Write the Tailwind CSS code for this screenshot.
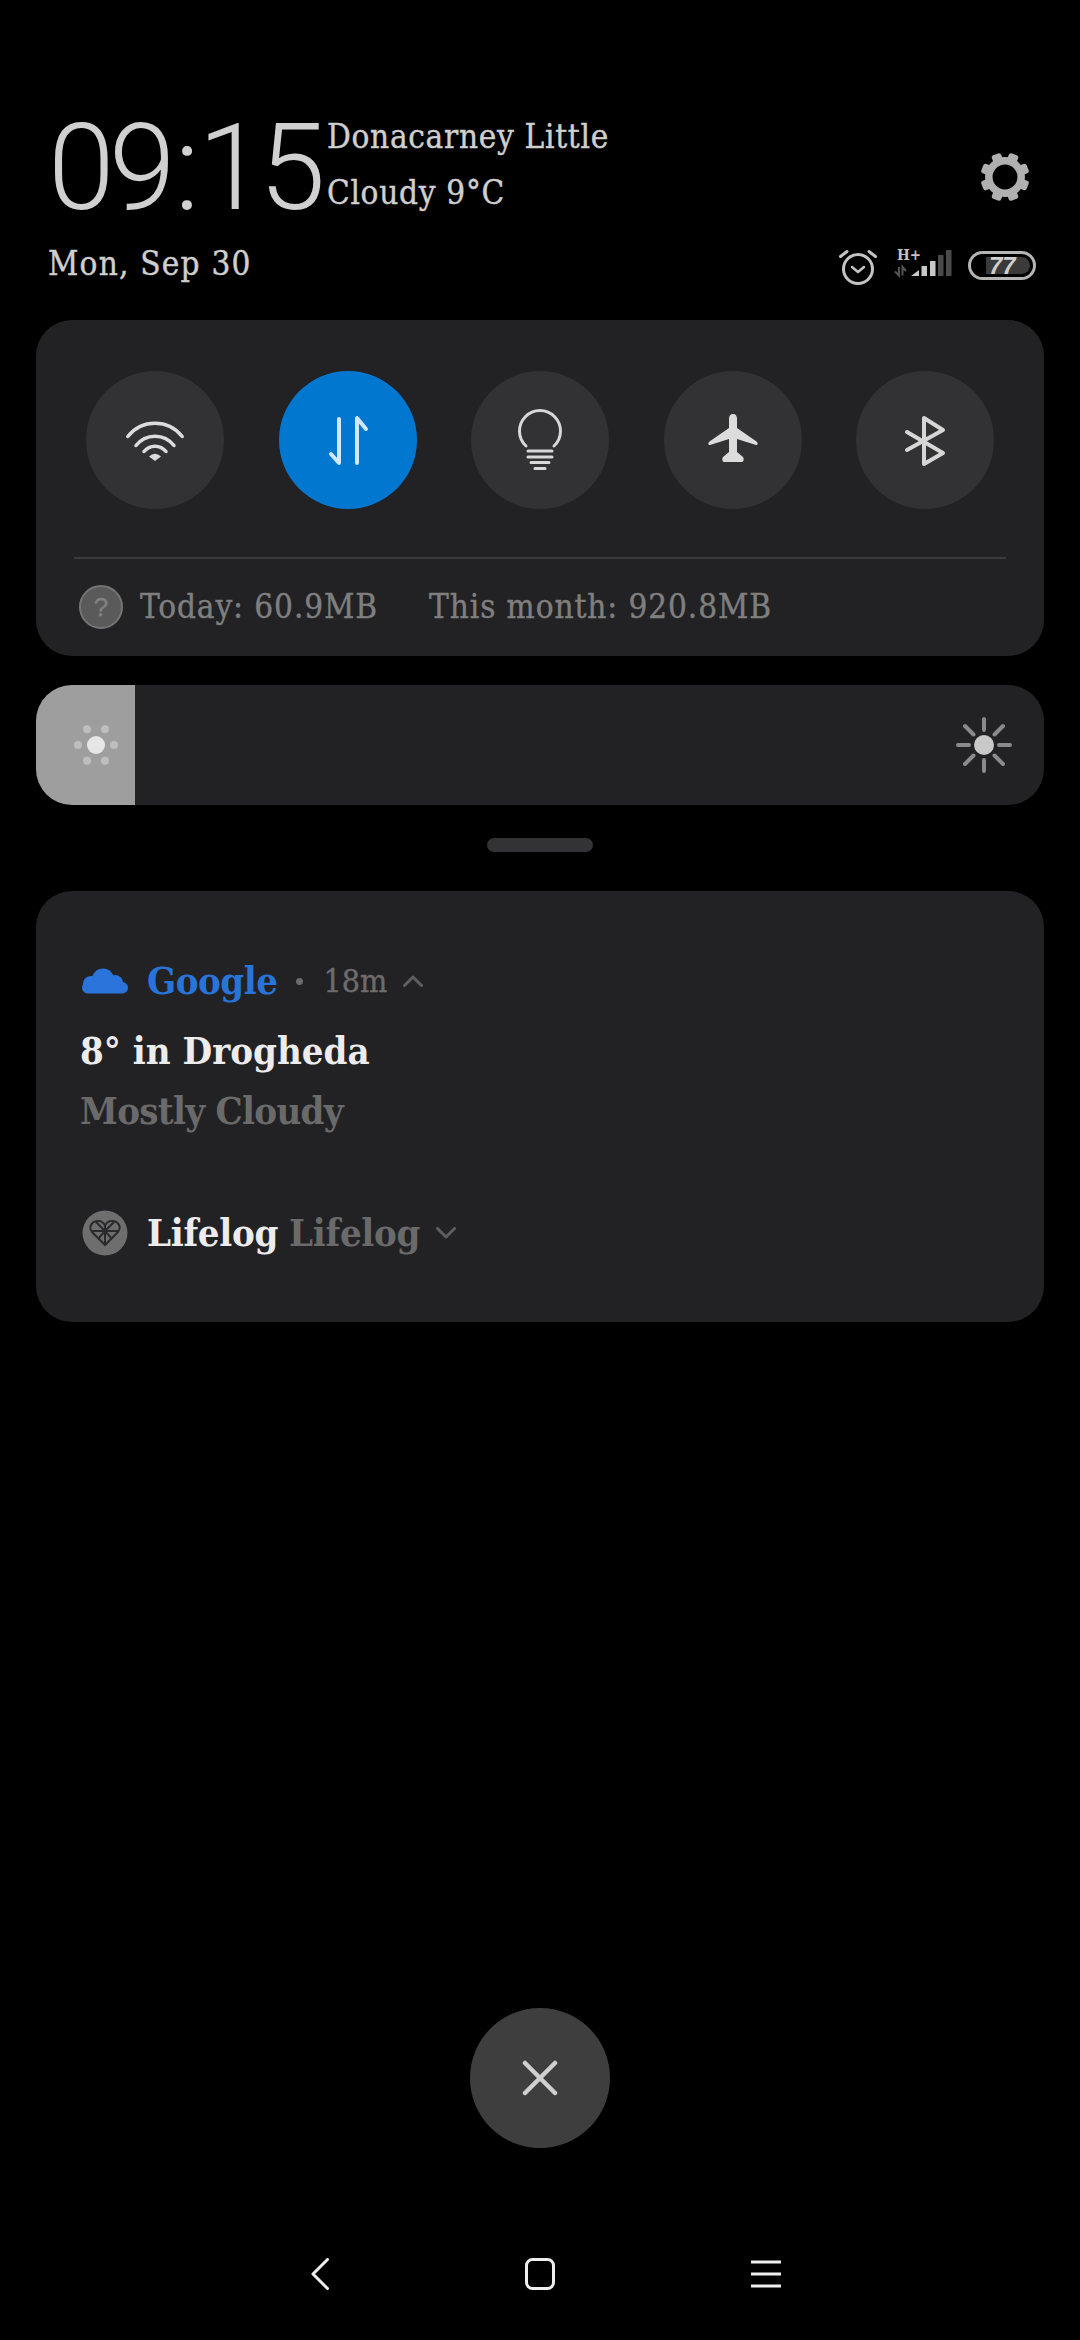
<!doctype html>
<html>
<head>
<meta charset="utf-8">
<script src="https://cdn.jsdelivr.net/npm/@tailwindcss/browser@4"></script>
</head>
<body class="bg-black">
<div class="w-[1080px] h-[2340px] bg-black flex flex-col font-['DejaVu_Serif_Condensed','DejaVu_Serif',serif] [font-stretch:condensed] overflow-hidden">
  <!-- Header -->
  <div class="h-[320px] px-[48px] pt-[108px] flex flex-col">
    <div class="flex h-[120px]">
      <div class="font-['Roboto',sans-serif] [font-stretch:normal] font-light text-[120px] leading-[120px] text-[#d0d0d0] w-[279px] flex">
        <span class="tracking-[-5.5px] w-[122px]">09</span><span class="w-[34px] text-center">:</span><span class="tracking-[-5.5px] -ml-[6px]">15</span>
      </div>
      <div class="flex flex-col text-[#cfcfcf] text-[33px] font-normal tracking-[0.7px] [-webkit-text-stroke:0.4px_#cfcfcf] mt-[1px]">
        <div class="leading-[56px]">Donacarney Little</div>
        <div class="leading-[56px]">Cloudy 9°C</div>
      </div>
      <div class="ml-auto mr-[1px] mt-[43px]">
        <svg width="52" height="52" viewBox="-26 -26 52 52" class="block" fill="#b0b0b0">
          <circle r="16.200" fill="none" stroke="#b0b0b0" stroke-width="7.500"/>
          <rect x="-5" y="-24.500" width="10" height="10" rx="2.500" transform="rotate(22.5)"/>
          <rect x="-5" y="-24.500" width="10" height="10" rx="2.500" transform="rotate(67.5)"/>
          <rect x="-5" y="-24.500" width="10" height="10" rx="2.500" transform="rotate(112.5)"/>
          <rect x="-5" y="-24.500" width="10" height="10" rx="2.500" transform="rotate(157.5)"/>
          <rect x="-5" y="-24.500" width="10" height="10" rx="2.500" transform="rotate(202.5)"/>
          <rect x="-5" y="-24.500" width="10" height="10" rx="2.500" transform="rotate(247.500)"/>
          <rect x="-5" y="-24.500" width="10" height="10" rx="2.500" transform="rotate(292.5)"/>
          <rect x="-5" y="-24.500" width="10" height="10" rx="2.500" transform="rotate(337.5)"/>
        </svg>
      </div>
    </div>
    <div class="flex items-center mt-[11px] h-[50px]">
      <div class="text-[#cfcfcf] text-[33px] font-normal tracking-[1.2px] [-webkit-text-stroke:0.4px_#cfcfcf] leading-[50px]">Mon, Sep 30</div>
      <div class="ml-auto flex items-center mr-[-12px] mt-[6px]">
        <svg width="40" height="40" viewBox="0 0 40 40" class="block mr-[16px]" fill="none" stroke="#c4c4c4">
          <circle cx="20" cy="22" r="14.500" stroke-width="3"/>
          <path d="M14 20l6 5 6-5" stroke-width="2.500" stroke-linecap="round" stroke-linejoin="round"/>
          <path d="M2.500 9.500 9 4.500M37.500 9.500 31 4.500" stroke-width="3" stroke-linecap="round"/>
        </svg>
        <div class="relative w-[60px] h-[36px] mr-[14px]">
          <span class="absolute left-[3px] top-[-3px] text-[15px] leading-[18px] font-bold text-[#c4c4c4]">H+</span>
          <svg width="60" height="36" viewBox="0 0 60 36" class="block" fill="#c8c8c8">
            <path d="M5 18v8.500l-4-4M8.500 26.500V18l3.500 4" fill="none" stroke="#555" stroke-width="2"/>
            <path d="M17 27l8-6v6z"/>
            <rect x="27.500" y="17" width="5.500" height="10"/>
            <rect x="36" y="12" width="5.500" height="15"/>
            <rect x="44" y="6" width="5.500" height="21" fill="#4a4a4a"/>
            <rect x="52" y="1" width="5.500" height="26" fill="#4a4a4a"/>
          </svg>
        </div>
        <div class="relative w-[68px] h-[29px] rounded-full border-[3px] border-[#b4b4b4] mr-[8px] -mt-[3px]">
          <div class="absolute left-[15px] top-[3px] w-[44px] h-[17px] rounded-r-full bg-[#3a3a3a]"></div>
          <div class="absolute left-[18px] top-[-2px] font-['Liberation_Sans',sans-serif] italic font-bold text-[24px] leading-[27px] text-[#cfcfcf]">77</div>
        </div>
      </div>
    </div>
  </div>

  <!-- Quick settings panel -->
  <div class="mx-[36px] h-[336px] rounded-[36px] bg-[#222224] flex flex-col">
    <div class="flex justify-between px-[50px] pt-[51px]">
      <div class="w-[138px] h-[138px] rounded-full bg-[#323234] flex items-center justify-center">
        <svg width="138" height="138" viewBox="0 0 138 138" fill="none" stroke="#dcdcdc" stroke-width="3.500" stroke-linecap="round" class="block">
          <path d="M41.800 65.500A34.500 34.500 0 0 1 96.200 65.500"/>
          <path d="M50 74.500A24 24 0 0 1 88 74.500"/>
          <path d="M58 80.500A14 14 0 0 1 80 80.500"/>
          <path d="M63 85.500Q69 80 75 85.500L69 90z" fill="#dcdcdc" stroke="none"/>
        </svg>
      </div>
      <div class="w-[138px] h-[138px] rounded-full bg-[#0277cf] flex items-center justify-center">
        <svg width="138" height="138" viewBox="0 0 138 138" fill="none" stroke="#d2e7f8" stroke-width="4" stroke-linecap="round" stroke-linejoin="round" class="block">
          <path d="M60 48V92L52 83"/>
          <path d="M78 92V47L87 58"/>
        </svg>
      </div>
      <div class="w-[138px] h-[138px] rounded-full bg-[#323234] flex items-center justify-center">
        <svg width="138" height="138" viewBox="0 0 138 138" fill="none" stroke="#d8d8d8" stroke-width="3" stroke-linecap="round" class="block">
          <path d="M55 75A20.500 20.500 0 1 1 83 75"/>
          <path d="M57 80H81M57 86H81M60 91.500H78M64 97.500H74"/>
        </svg>
      </div>
      <div class="w-[138px] h-[138px] rounded-full bg-[#323234] flex items-center justify-center">
        <svg width="138" height="138" viewBox="0 0 138 138" fill="#dcdcdc" class="block">
          <path d="M69 43c2.500 0 4 2 4 4.500V57l19.500 13.500c1.500 1 1.500 4-.500 3.500L73 68v13l6 5c1 1 1 5-1 5H60c-2 0-2-4-1-5l6-5V68l-19 6c-2 .500-2-2.500-.500-3.500L65 57v-9.500c0-2.500 1.500-4.500 4-4.500z"/>
        </svg>
      </div>
      <div class="w-[138px] h-[138px] rounded-full bg-[#323234] flex items-center justify-center">
        <svg width="138" height="138" viewBox="0 0 138 138" fill="none" stroke="#d6d6d6" stroke-width="4" stroke-linecap="round" stroke-linejoin="round" class="block">
          <path d="M51 61 87 82 68 93V47L87 59 51 79"/>
        </svg>
      </div>
    </div>
    <div class="mx-[38px] mt-[48px] h-[2px] bg-[#3a3a3c]"></div>
    <div class="flex items-center pl-[43px] mt-[26px] h-[44px] text-[#7f7f7f] text-[33px] tracking-[0.9px] [-webkit-text-stroke:0.4px_#7f7f7f] font-normal">
      <div class="w-[44px] h-[44px] rounded-full bg-[#5a5a5a] border-[2px] border-[#757575] flex items-center justify-center text-[#838383] text-[26px] leading-none tracking-normal font-['Liberation_Sans',sans-serif]">?</div>
      <div class="ml-[17px]">Today: 60.9MB</div>
      <div class="ml-[51px]">This month: 920.8MB</div>
    </div>
  </div>

  <!-- Brightness slider -->
  <div class="mx-[36px] mt-[29px] h-[120px] rounded-[36px] bg-[#222224] overflow-hidden flex items-center justify-between">
    <div class="w-[99px] h-[120px] bg-[#9e9e9e] flex items-center justify-center pl-[21px]">
      <svg width="46" height="46" viewBox="-23 -23 46 46" fill="#bebebe" class="block">
        <circle r="9" fill="#e6e6e6"/>
        <circle cx="18" r="4"/><circle cx="-18" r="4"/>
        <circle cx="9" cy="15.700" r="4"/><circle cx="-9" cy="15.700" r="4"/>
        <circle cx="9" cy="-15.700" r="4"/><circle cx="-9" cy="-15.700" r="4"/>
      </svg>
    </div>
    <div class="mr-[30px]">
      <svg width="60" height="60" viewBox="-30 -30 60 60" fill="none" stroke="#8a8a8a" stroke-width="4" stroke-linecap="round" class="block">
        <circle r="10" fill="#c8c8c8" stroke="none"/>
        <path d="M0-15V-26M0 15V26M-15 0H-26M15 0H26M-10.500-10.500-19-19M10.500-10.500 19-19M-10.500 10.500-19 19M10.500 10.500 19 19"/>
      </svg>
    </div>
  </div>

  <!-- Handle -->
  <div class="mx-auto mt-[33px] w-[106px] h-[14px] rounded-full bg-[#333335]"></div>

  <!-- Notifications -->
  <div class="mx-[36px] mt-[39px] h-[431px] rounded-[36px] bg-[#222224] flex flex-col pl-[44px] pt-[60px]">
    <div class="flex items-center h-[60px]">
      <svg width="46" height="26" viewBox="0 0 46 26" fill="#2a74dc" class="block ml-[2px]">
        <rect x="0" y="14" width="46" height="11.500" rx="5.700"/>
        <circle cx="21" cy="11.500" r="11"/>
        <circle cx="33" cy="15" r="8"/>
        <circle cx="9" cy="16" r="8"/>
      </svg>
      <span class="ml-[19px] text-[#2874d8] text-[38px] tracking-[-0.5px] font-bold leading-[60px]">Google</span>
      <span class="ml-[19px] w-[7px] h-[7px] rounded-full bg-[#6a6a6a]"></span>
      <span class="ml-[20px] text-[#6c6c6c] text-[32px] font-normal [-webkit-text-stroke:0.4px_#6c6c6c] leading-[60px]">18m</span>
      <svg width="20" height="12" viewBox="0 0 20 12" fill="none" stroke="#5e5e5e" stroke-width="3" stroke-linecap="round" stroke-linejoin="round" class="block ml-[16px]">
        <path d="M1.500 10.500 10 2l8.500 8.500"/>
      </svg>
    </div>
    <div class="text-[#ececec] text-[38px] font-bold leading-[60px] mt-[10px]">8° in Drogheda</div>
    <div class="text-[#6a6a6a] text-[38px] tracking-[-0.7px] font-bold leading-[60px]">Mostly Cloudy</div>
    <div class="flex items-center h-[60px] mt-[62px]">
      <svg width="46" height="46" viewBox="0 0 46 46" class="block ml-[2px]" fill="none" stroke="#2a2a2c" stroke-width="2">
        <circle cx="23" cy="23" r="22.500" fill="#6e6e6e" stroke="none"/>
        <path d="M23 35 10 22c-4-5 0-11 6-11 3 0 6 2 7 5 1-3 4-5 7-5 6 0 10 6 6 11z"/>
        <path d="M23 16v19M10 21h26M14 12l9 9 9-9M23 21l-7 8M23 21l7 8"/>
      </svg>
      <span class="ml-[19px] text-[#ececec] text-[38px] tracking-[-0.3px] font-bold leading-[60px]">Lifelog</span>
      <span class="ml-[11px] text-[#6a6a6a] text-[38px] tracking-[-0.3px] font-bold leading-[60px]">Lifelog</span>
      <svg width="20" height="12" viewBox="0 0 20 12" fill="none" stroke="#5e5e5e" stroke-width="3" stroke-linecap="round" stroke-linejoin="round" class="block ml-[16px]">
        <path d="M1.500 1.500 10 10l8.500-8.500"/>
      </svg>
    </div>
  </div>

  <!-- Close -->
  <div class="mt-auto flex justify-center">
    <div class="w-[140px] h-[140px] rounded-full bg-[#3e3e3e] flex items-center justify-center">
      <svg width="36" height="36" viewBox="0 0 36 36" fill="none" stroke="#cfcfcf" stroke-width="4.500" stroke-linecap="round" class="block">
        <path d="M3 3 33 33M33 3 3 33"/>
      </svg>
    </div>
  </div>

  <!-- Nav bar -->
  <div class="mt-[110px] mb-[50px] h-[32px] flex items-center pl-[311px]">
    <svg width="18" height="32" viewBox="0 0 18 32" fill="none" stroke="#eeeeee" stroke-width="3" stroke-linecap="round" stroke-linejoin="round" class="block">
      <path d="M16.500 1.500 2 16l14.500 14.500"/>
    </svg>
    <svg width="30" height="32" viewBox="0 0 30 32" fill="none" stroke="#eeeeee" stroke-width="3" class="block ml-[196px]">
      <rect x="1.500" y="1.500" width="27" height="29" rx="6"/>
    </svg>
    <svg width="30" height="28" viewBox="0 0 30 28" fill="none" stroke="#eeeeee" stroke-width="3" class="block ml-[196px]">
      <path d="M0 2H30M0 14H30M0 26H30"/>
    </svg>
  </div>
</div>
</body>
</html>
